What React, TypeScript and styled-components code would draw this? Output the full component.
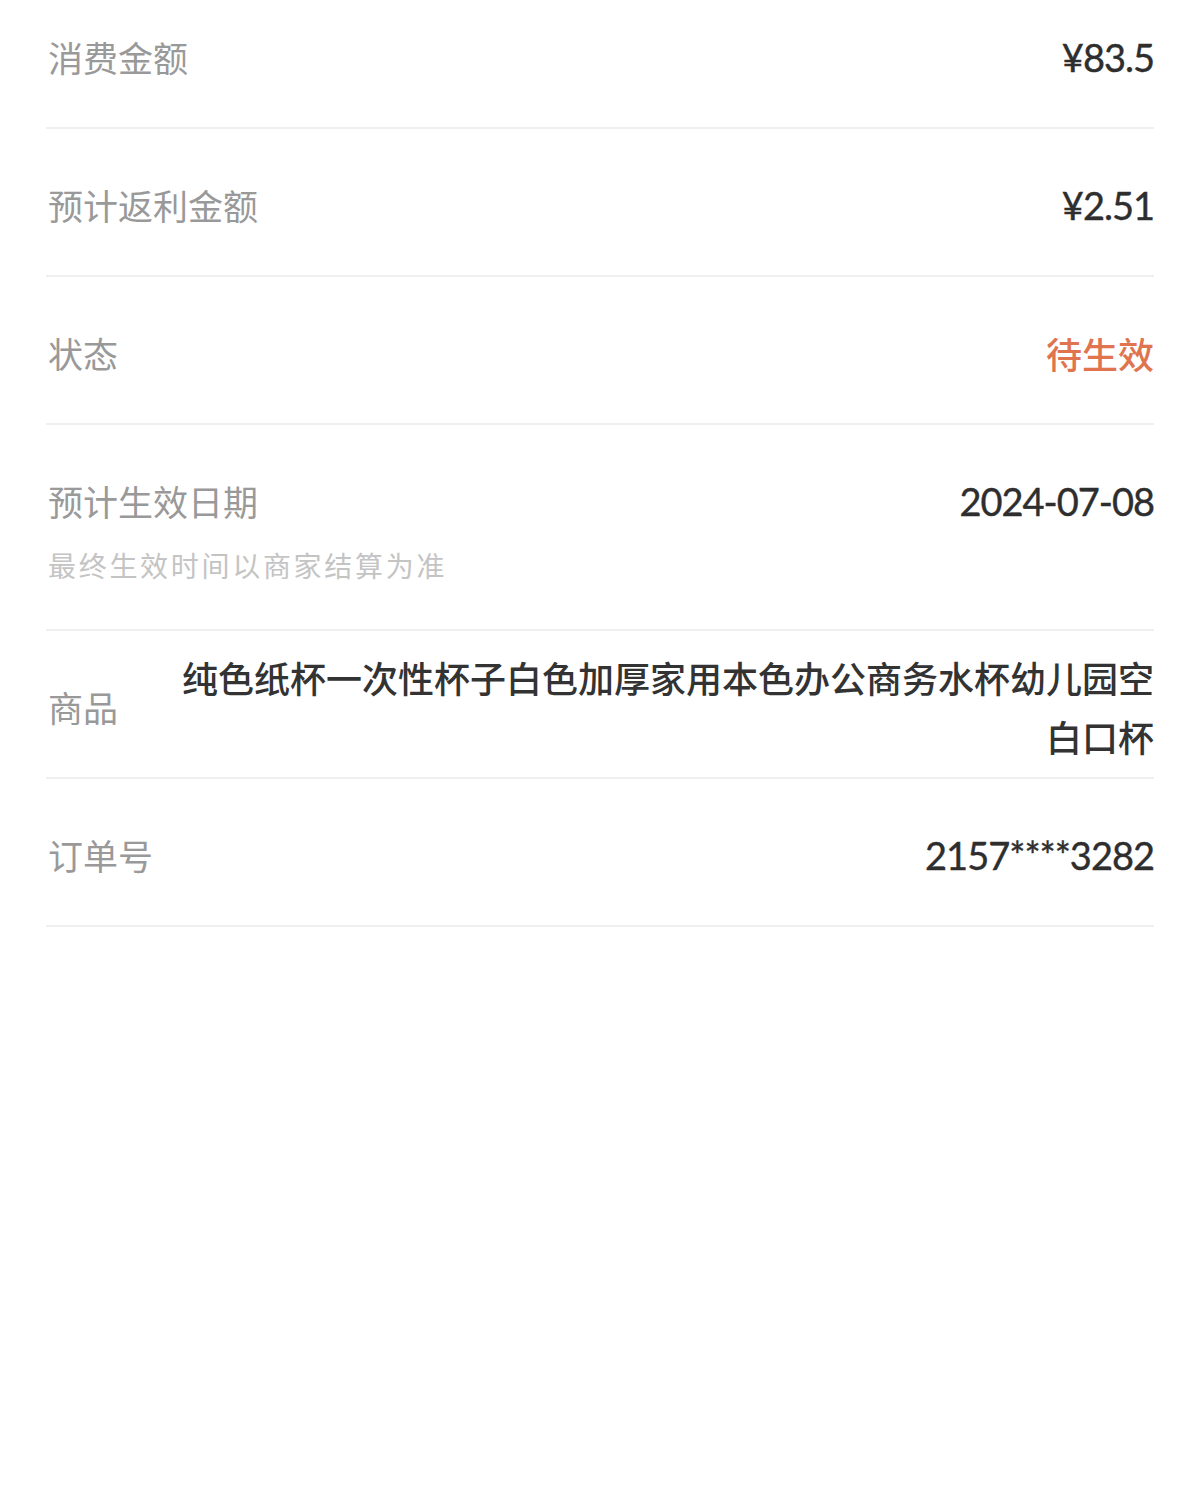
import React from "react";
import styled, { createGlobalStyle } from "styled-components";

const GlobalStyle = createGlobalStyle`
  html, body {
    margin: 0;
    padding: 0;
    background: #ffffff;
  }
  body {
    font-family: "Noto Sans CJK SC", "Noto Sans", sans-serif;
  }
`;

const Page = styled.div`
  width: 1200px;
  min-height: 1500px;
  background: #fff;
  padding: 0 46px;
  box-sizing: border-box;
`;

const Row = styled.div<{ $wrap?: boolean }>`
  display: flex;
  align-items: ${(p) => (p.$wrap ? "center" : "flex-start")};
  justify-content: space-between;
  gap: 58px;
  padding: ${(p) => (p.$wrap ? "17px 0 11px" : "52px 0 46px")};
  border-bottom: 2px solid #efefef;

  &:first-child {
    padding-top: 33px;
  }
`;

const LabelCol = styled.div`
  display: flex;
  flex-direction: column;
  flex-shrink: 0;
`;

const Label = styled.div`
  flex-shrink: 0;
  font-family: "Noto Sans CJK SC", sans-serif;
  font-size: 35px;
  line-height: 48px;
  color: #999999;
  padding-left: 2px;
`;

const Hint = styled.div`
  margin-top: 22px;
  font-family: "Noto Sans CJK SC", sans-serif;
  font-size: 28px;
  letter-spacing: 2.7px;
  line-height: 36px;
  color: #c4c4c4;
  padding-left: 2px;
`;

const Value = styled.div`
  font-family: Lato, "Noto Sans CJK SC", sans-serif;
  font-size: 38px;
  line-height: 48px;
  color: #2e2e2e;
  letter-spacing: -1px;
  text-align: right;
  -webkit-text-stroke: 0.4px #2e2e2e;
`;

const Status = styled.div`
  font-family: "Noto Sans CJK SC", sans-serif;
  font-size: 36px;
  line-height: 48px;
  font-weight: 500;
  color: #e0744f;
`;

const Product = styled.div`
  flex: 1;
  font-family: "Noto Sans CJK SC", sans-serif;
  font-size: 36px;
  line-height: 59px;
  font-weight: 500;
  color: #333333;
  text-align: right;
`;

export default function App() {
  return (
    <Page>
      <GlobalStyle />
      <Row>
        <Label>消费金额</Label>
        <Value>¥83.5</Value>
      </Row>
      <Row>
        <Label>预计返利金额</Label>
        <Value>¥2.51</Value>
      </Row>
      <Row>
        <Label>状态</Label>
        <Status>待生效</Status>
      </Row>
      <Row>
        <LabelCol>
          <Label>预计生效日期</Label>
          <Hint>最终生效时间以商家结算为准</Hint>
        </LabelCol>
        <Value>2024-07-08</Value>
      </Row>
      <Row $wrap>
        <Label>商品</Label>
        <Product>纯色纸杯一次性杯子白色加厚家用本色办公商务水杯幼儿园空白口杯</Product>
      </Row>
      <Row>
        <Label>订单号</Label>
        <Value>2157****3282</Value>
      </Row>
    </Page>
  );
}
